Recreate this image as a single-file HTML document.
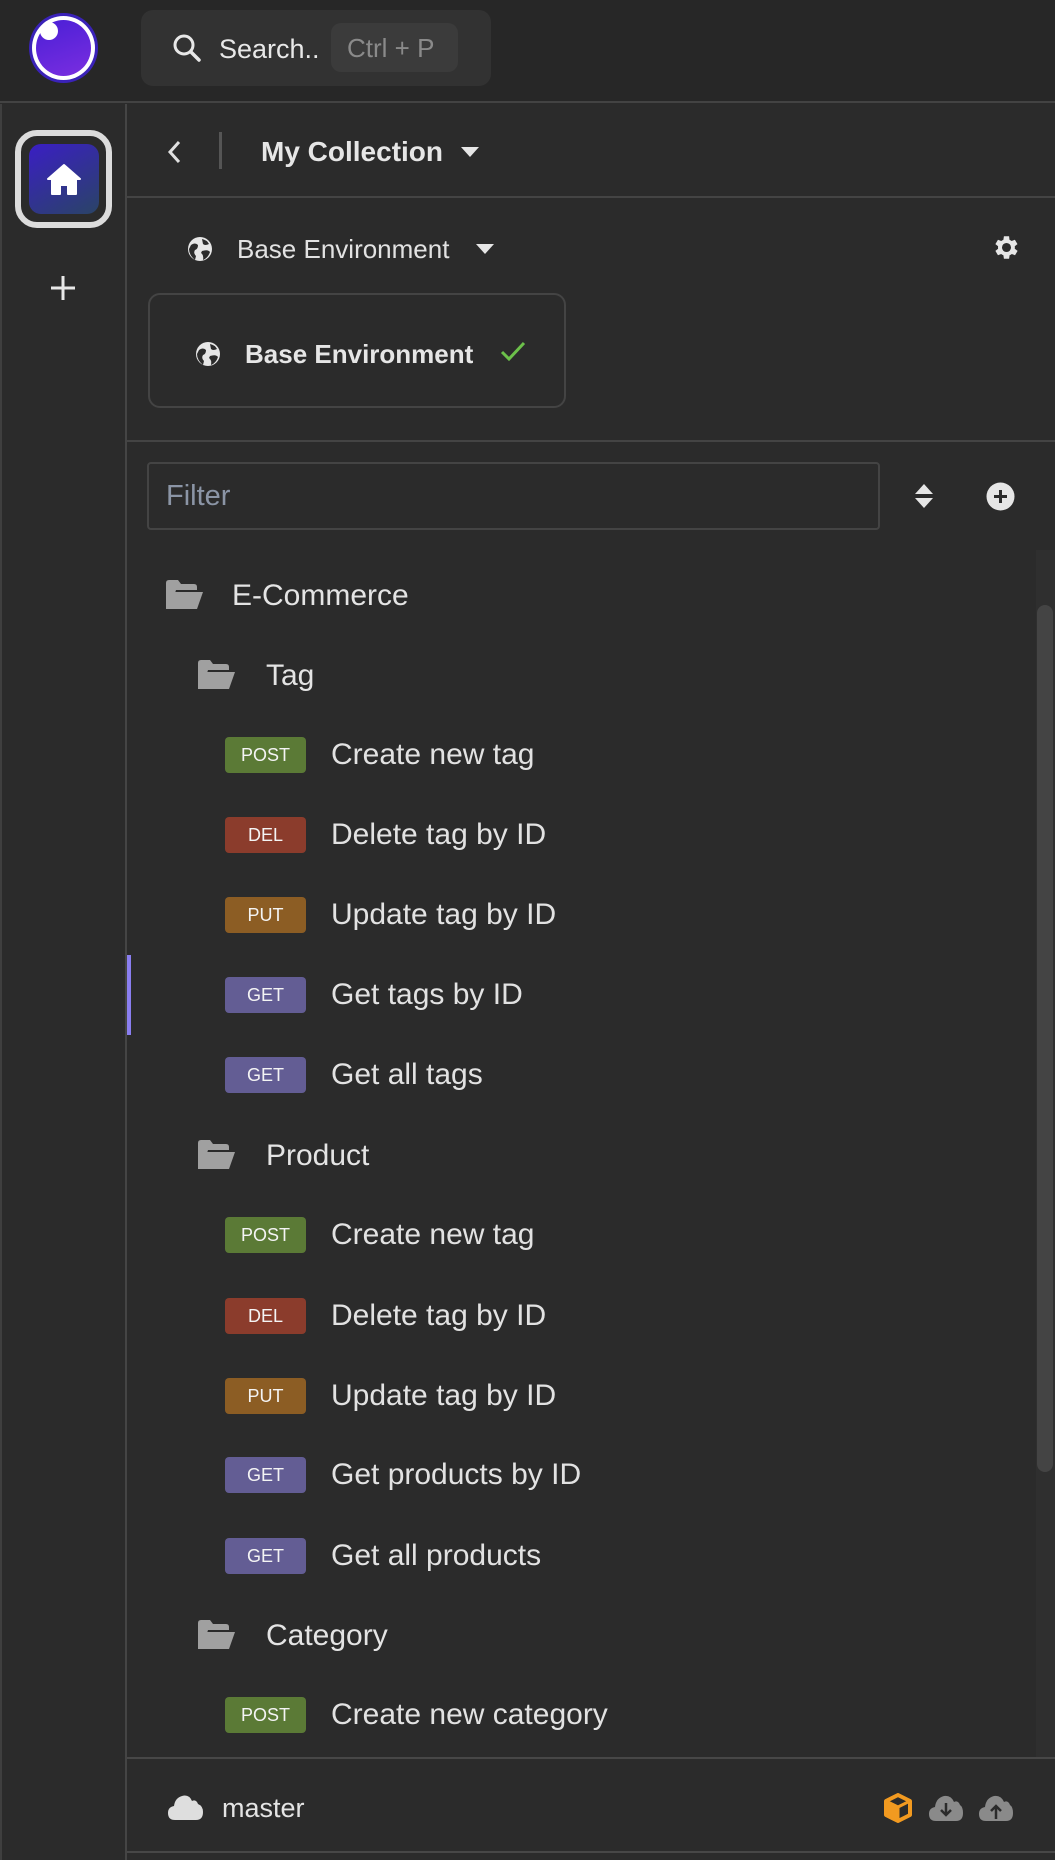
<!DOCTYPE html>
<html><head><meta charset="utf-8"><style>
*{margin:0;padding:0;box-sizing:border-box}
body{width:1055px;height:1860px;background:#2b2b2b;font-family:"Liberation Sans",sans-serif;color:#e4e4e4;position:relative;overflow:hidden}
.a{position:absolute}
.t{position:absolute;white-space:nowrap;line-height:1}
.badge{position:absolute;left:225px;width:81px;height:36px;border-radius:4px;color:#f4f4f4;font-size:18px;display:flex;align-items:center;justify-content:center}
.post{background:#5b7a36}.del{background:#8b3c2c}.put{background:#8c5d24}.get{background:#635d94}
.item{position:absolute;left:331px;font-size:30px;color:#e2e2e2;white-space:nowrap;line-height:1}
</style></head><body>
<div class="a" style="left:0;top:0;width:1055px;height:103px;background:#272727;border-bottom:2px solid #434343"></div>
<div class="a" style="left:29px;top:13px;width:69px;height:70px;border-radius:50%;background:#3a22b8"></div>
<div class="a" style="left:32px;top:16px;width:63px;height:64px;border-radius:50%;background:#fff"></div>
<div class="a" style="left:36px;top:20px;width:55px;height:56px;border-radius:50%;background:linear-gradient(160deg,#4a1fd6,#7a2ee0)"></div>
<div class="a" style="left:40px;top:22px;width:18px;height:18px;border-radius:50%;background:#fff"></div>
<div class="a" style="left:141px;top:10px;width:350px;height:76px;border-radius:12px;background:#323232"></div>
<svg class="a" style="left:172px;top:33px" width="30" height="30" viewBox="0 0 30 30"><circle cx="12" cy="12" r="9" fill="none" stroke="#e8e8e8" stroke-width="3"/><line x1="19" y1="19" x2="27" y2="27" stroke="#e8e8e8" stroke-width="3.5" stroke-linecap="round"/></svg>
<div class="t" style="left:219px;top:36px;font-size:27px;color:#e8e8e8">Search..</div>
<div class="a" style="left:331px;top:23px;width:127px;height:49px;border-radius:10px;background:#3b3b3b"></div>
<div class="t" style="left:347px;top:35px;font-size:26px;color:#8a8a8a">Ctrl + P</div>
<div class="a" style="left:0;top:104px;width:2px;height:1756px;background:#3f3f3f"></div>
<div class="a" style="left:125px;top:104px;width:2px;height:1756px;background:#454545"></div>
<div class="a" style="left:15px;top:130px;width:97px;height:98px;border:6px solid #dcdcdc;border-radius:22px"></div>
<div class="a" style="left:29px;top:144px;width:70px;height:70px;border-radius:12px;background:linear-gradient(150deg,#3a1ec4,#2a4466)"></div>
<svg class="a" style="left:44px;top:162px" width="40" height="36" viewBox="0 0 40 36"><path d="M20 3 L36 17 L32 17 L32 32 L24 32 L24 23 L16 23 L16 32 L8 32 L8 17 L4 17 Z" fill="#fff" stroke="#fff" stroke-width="2" stroke-linejoin="round"/></svg>
<svg class="a" style="left:50px;top:275px" width="26" height="26"><path d="M13 1V25M1 13H25" stroke="#e8e8e8" stroke-width="3"/></svg>
<svg class="a" style="left:165px;top:139px" width="18" height="26"><path d="M14 3L5 13L14 23" fill="none" stroke="#e0e0e0" stroke-width="3"/></svg>
<div class="a" style="left:219px;top:132px;width:3px;height:37px;background:#555"></div>
<div class="t" style="left:261px;top:138px;font-size:28px;font-weight:bold;color:#e6e6e6">My Collection</div>
<svg class="a" style="left:460px;top:146px" width="20" height="12"><path d="M1 1H19L10 11Z" fill="#e6e6e6"/></svg>
<div class="a" style="left:127px;top:196px;width:928px;height:2px;background:#444"></div>
<svg class="a" style="left:187px;top:236px" width="26" height="26" viewBox="0 0 26 26"><circle cx="13" cy="13" r="12" fill="#e6e6e6"/><path d="M4 9 Q8 6 11 9 Q11 13 8 14 Q6 17 9 20 L8 24 Q2 19 2 13 Z M15 3 Q20 4 22 8 Q18 10 16 8 Z M15 15 Q21 13 23 16 Q21 22 16 24 Q17 19 14 17 Z" fill="#2b2b2b"/></svg>
<div class="t" style="left:237px;top:236px;font-size:26px;color:#e2e2e2">Base Environment</div>
<svg class="a" style="left:475px;top:243px" width="20" height="12"><path d="M1 1H19L10 11Z" fill="#e6e6e6"/></svg>
<svg class="a" style="left:991px;top:232px" width="31" height="31" viewBox="0 0 24 24"><path fill="#e6e6e6" d="M19.4 13a7.5 7.5 0 0 0 0-2l2.1-1.6-2-3.4-2.5 1a7 7 0 0 0-1.7-1L15 3.3h-4l-.4 2.7a7 7 0 0 0-1.7 1l-2.5-1-2 3.4L6.5 11a7.5 7.5 0 0 0 0 2l-2.1 1.6 2 3.4 2.5-1a7 7 0 0 0 1.7 1l.4 2.7h4l.4-2.7a7 7 0 0 0 1.7-1l2.5 1 2-3.4zM13 15.5a3.5 3.5 0 1 1 0-7 3.5 3.5 0 0 1 0 7z" transform="translate(-1 0)"/></svg>
<div class="a" style="left:148px;top:293px;width:418px;height:115px;border:2px solid #444;border-radius:12px"></div>
<svg class="a" style="left:195px;top:341px" width="26" height="26" viewBox="0 0 26 26"><circle cx="13" cy="13" r="12" fill="#e6e6e6"/><path d="M4 9 Q8 6 11 9 Q11 13 8 14 Q6 17 9 20 L8 24 Q2 19 2 13 Z M15 3 Q20 4 22 8 Q18 10 16 8 Z M15 15 Q21 13 23 16 Q21 22 16 24 Q17 19 14 17 Z" fill="#2b2b2b"/></svg>
<div class="t" style="left:245px;top:341px;font-size:26px;font-weight:bold;color:#e6e6e6">Base Environment</div>
<svg class="a" style="left:500px;top:340px" width="26" height="22"><path d="M2 12L9 19L24 3" fill="none" stroke="#6cc04a" stroke-width="3"/></svg>
<div class="a" style="left:127px;top:440px;width:928px;height:2px;background:#444"></div>
<div class="a" style="left:147px;top:462px;width:733px;height:68px;border:2px solid #444;border-radius:4px"></div>
<div class="t" style="left:166px;top:482px;font-size:29px;color:#8b95a6">Filter</div>
<svg class="a" style="left:913px;top:483px" width="22" height="27"><path d="M11 1L20 11H2Z M2 15H20L11 25Z" fill="#e6e6e6"/></svg>
<svg class="a" style="left:986px;top:482px" width="29" height="29"><circle cx="14.5" cy="14.5" r="14" fill="#e6e6e6"/><path d="M14.5 8V21M8 14.5H21" stroke="#2b2b2b" stroke-width="3"/></svg>
<div class="a" style="left:1036px;top:550px;width:19px;height:1207px;background:#2f2f2f"></div>
<div class="a" style="left:1037px;top:605px;width:16px;height:867px;border-radius:8px;background:#444"></div>
<svg class="a" style="left:166px;top:580px" width="38" height="29" viewBox="0 0 38 29"><path d="M0 3Q0 0 3 0H12L15 4H28Q31 4 31 7V10H10L4 29H0Z" fill="#a0a0a0"/><path d="M9 12H37L31 29H2Z" fill="#a0a0a0"/></svg>
<div class="t" style="left:232px;top:581px;font-size:30px">E-Commerce</div>
<svg class="a" style="left:198px;top:660px" width="38" height="29" viewBox="0 0 38 29"><path d="M0 3Q0 0 3 0H12L15 4H28Q31 4 31 7V10H10L4 29H0Z" fill="#a0a0a0"/><path d="M9 12H37L31 29H2Z" fill="#a0a0a0"/></svg>
<div class="t" style="left:266px;top:661px;font-size:30px">Tag</div>
<div class="badge post" style="top:737px">POST</div><div class="item" style="top:740px">Create new tag</div>
<div class="badge del" style="top:817px">DEL</div><div class="item" style="top:820px">Delete tag by ID</div>
<div class="badge put" style="top:897px">PUT</div><div class="item" style="top:900px">Update tag by ID</div>
<div class="a" style="left:127px;top:955px;width:4px;height:80px;background:#8a7ef0"></div>
<div class="badge get" style="top:977px">GET</div><div class="item" style="top:980px">Get tags by ID</div>
<div class="badge get" style="top:1057px">GET</div><div class="item" style="top:1060px">Get all tags</div>
<svg class="a" style="left:198px;top:1140px" width="38" height="29" viewBox="0 0 38 29"><path d="M0 3Q0 0 3 0H12L15 4H28Q31 4 31 7V10H10L4 29H0Z" fill="#a0a0a0"/><path d="M9 12H37L31 29H2Z" fill="#a0a0a0"/></svg>
<div class="t" style="left:266px;top:1141px;font-size:30px">Product</div>
<div class="badge post" style="top:1217px">POST</div><div class="item" style="top:1220px">Create new tag</div>
<div class="badge del" style="top:1298px">DEL</div><div class="item" style="top:1301px">Delete tag by ID</div>
<div class="badge put" style="top:1378px">PUT</div><div class="item" style="top:1381px">Update tag by ID</div>
<div class="badge get" style="top:1457px">GET</div><div class="item" style="top:1460px">Get products by ID</div>
<div class="badge get" style="top:1538px">GET</div><div class="item" style="top:1541px">Get all products</div>
<svg class="a" style="left:198px;top:1620px" width="38" height="29" viewBox="0 0 38 29"><path d="M0 3Q0 0 3 0H12L15 4H28Q31 4 31 7V10H10L4 29H0Z" fill="#a0a0a0"/><path d="M9 12H37L31 29H2Z" fill="#a0a0a0"/></svg>
<div class="t" style="left:266px;top:1621px;font-size:30px">Category</div>
<div class="badge post" style="top:1697px">POST</div><div class="item" style="top:1700px">Create new category</div>
<div class="a" style="left:127px;top:1757px;width:928px;height:2px;background:#474747"></div>
<svg class="a" style="left:167px;top:1793px" width="37" height="28" viewBox="0 0 37 28"><path d="M8 27Q1 27 1 20Q1 14 7 13Q8 5 15 3Q22 1 25 8Q29 6 31 11Q36 13 36 19Q36 27 29 27Z" fill="#dedede"/></svg>
<div class="t" style="left:222px;top:1795px;font-size:27px;color:#e4e4e4">master</div>
<svg class="a" style="left:883px;top:1793px" width="30" height="30" viewBox="0 0 30 30"><path d="M15 2L27 8V22L15 28L3 22V8Z" fill="none" stroke="#f29a20" stroke-width="4" stroke-linejoin="round"/><path d="M15 14L27 8M15 14V28M15 14L3 8" stroke="#f29a20" stroke-width="3"/><path d="M3 8L15 14V28L3 22Z" fill="#f29a20"/></svg>
<svg class="a" style="left:928px;top:1793px" width="36" height="30" viewBox="0 0 36 30"><path d="M8 28Q1 28 1 21Q1 15 7 14Q8 5 16 3Q23 2 26 9Q30 7 32 12Q35 14 35 20Q35 28 28 28Z" fill="#8a8a8a"/><path d="M18 10V22M13 17L18 22L23 17" fill="none" stroke="#2b2b2b" stroke-width="2.5"/></svg>
<svg class="a" style="left:978px;top:1793px" width="36" height="30" viewBox="0 0 36 30"><path d="M8 28Q1 28 1 21Q1 15 7 14Q8 5 16 3Q23 2 26 9Q30 7 32 12Q35 14 35 20Q35 28 28 28Z" fill="#8a8a8a"/><path d="M18 26V13M13 18L18 13L23 18" fill="none" stroke="#2b2b2b" stroke-width="2.5"/></svg>
<div class="a" style="left:127px;top:1851px;width:928px;height:2px;background:#474747"></div>
</body></html>
